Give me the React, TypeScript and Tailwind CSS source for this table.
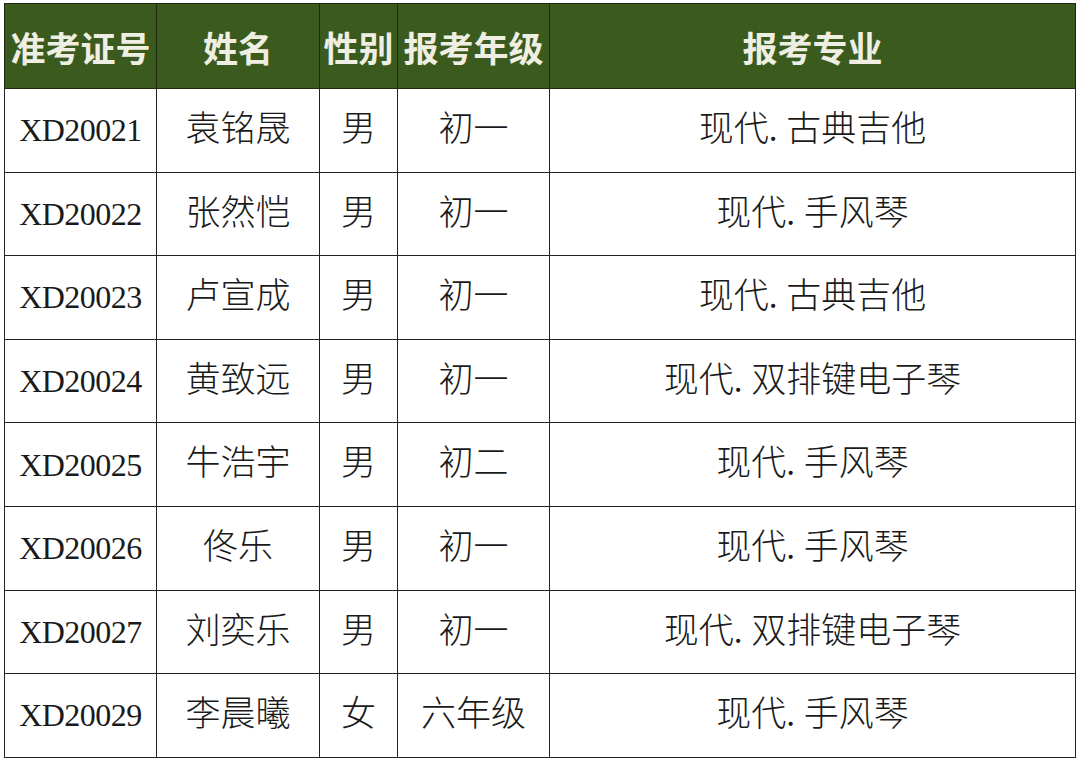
import React from 'react'

type Row = { id: string; name: string; sex: string; grade: string; major: string }

const rows: Row[] = [
  { id: 'XD20021', name: '袁铭晟', sex: '男', grade: '初一', major: '现代. 古典吉他' },
  { id: 'XD20022', name: '张然恺', sex: '男', grade: '初一', major: '现代. 手风琴' },
  { id: 'XD20023', name: '卢宣成', sex: '男', grade: '初一', major: '现代. 古典吉他' },
  { id: 'XD20024', name: '黄致远', sex: '男', grade: '初一', major: '现代. 双排键电子琴' },
  { id: 'XD20025', name: '牛浩宇', sex: '男', grade: '初二', major: '现代. 手风琴' },
  { id: 'XD20026', name: '佟乐', sex: '男', grade: '初一', major: '现代. 手风琴' },
  { id: 'XD20027', name: '刘奕乐', sex: '男', grade: '初一', major: '现代. 双排键电子琴' },
  { id: 'XD20029', name: '李晨曦', sex: '女', grade: '六年级', major: '现代. 手风琴' },
]

const headers = ['准考证号', '姓名', '性别', '报考年级', '报考专业']

export default function App() {
  return (
    <div className="w-[1080px] h-[763px] bg-white pl-[4px] pt-[3px]">
      <table className="border-collapse table-fixed w-[1071px]">
        <colgroup>
          <col className="w-[152px]" />
          <col className="w-[163px]" />
          <col className="w-[78px]" />
          <col className="w-[152px]" />
          <col className="w-[526px]" />
        </colgroup>
        <thead>
          <tr className="h-[85px] bg-[#3b5a1e]">
            {headers.map((h) => (
              <th
                key={h}
                className="border border-[#1e2a14] p-0 text-center font-bold text-[35px] leading-none text-[#eeeee2] whitespace-nowrap [font-family:'Noto_Sans_CJK_SC',sans-serif]"
              >
                {h}
              </th>
            ))}
          </tr>
        </thead>
        <tbody>
          {rows.map((r) => (
            <tr key={r.id} className="h-[83.6px]">
              <td className="border border-[#222] p-0 text-center text-[32px] tracking-[-0.5px] text-[#1a1a1a] whitespace-nowrap [font-family:'Liberation_Serif',serif]">
                {r.id}
              </td>
              {[r.name, r.sex, r.grade, r.major].map((v, i) => (
                <td
                  key={i}
                  className="border border-[#222] p-0 text-center text-[35px] font-light text-[#1a1a1a] whitespace-nowrap [font-family:'Liberation_Serif','Noto_Sans_CJK_SC',serif]"
                >
                  {v}
                </td>
              ))}
            </tr>
          ))}
        </tbody>
      </table>
    </div>
  )
}
